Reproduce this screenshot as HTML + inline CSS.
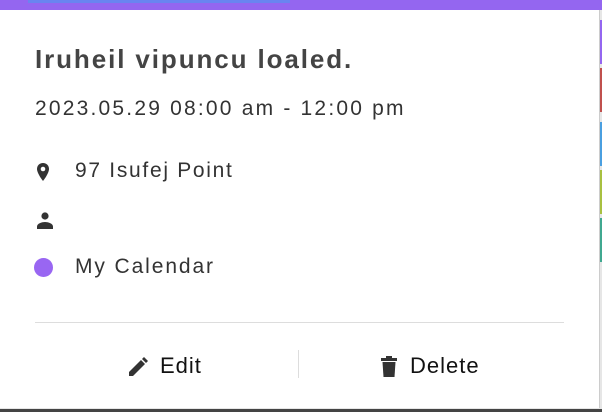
<!DOCTYPE html>
<html><head><style>
body{margin:0;width:602px;height:412px;overflow:hidden;background:#e6e6e6;font-family:"Liberation Sans",sans-serif;position:relative}
.top{position:absolute;left:0;top:0;width:602px;height:10px;background:#9466f0}
.blue{position:absolute;left:28px;top:0;width:262px;height:3px;background:#6a84f0}
.card{position:absolute;left:0;top:10px;width:599px;height:398px;background:#fff;border-right:1px solid #ccc}
.bot{position:absolute;left:0;top:409px;width:602px;height:3px;background:#444}
.side{position:absolute;left:600px;width:2px}
.t{position:absolute;white-space:nowrap}
</style></head><body>
<div class="top"><div class="blue"></div></div>
<div class="side" style="top:20px;height:44px;background:#9466f0"></div>
<div class="side" style="top:68px;height:44px;background:#c0504d"></div>
<div class="side" style="top:122px;height:44px;background:#4a9fe0"></div>
<div class="side" style="top:170px;height:44px;background:#a8c040"></div>
<div class="side" style="top:218px;height:44px;background:#40a890"></div>
<div class="card">
<div class="t" style="left:35px;top:34px;font-size:26px;letter-spacing:1.9px;font-weight:bold;color:#444">Iruheil vipuncu loaled.</div>
<div class="t" style="left:35px;top:87px;font-size:21px;letter-spacing:2.2px;color:#333">2023.05.29 08:00 am - 12:00 pm</div>
<svg style="position:absolute;left:35px;top:152px" width="16" height="20" viewBox="0 0 16 20"><path d="M8 1C4.4 1 2 3.6 2 7c0 4.5 6 12 6 12s6-7.5 6-12c0-3.4-2.4-6-6-6z" fill="#333"/><circle cx="8" cy="7" r="2.3" fill="#fff"/></svg>
<div class="t" style="left:75px;top:149px;font-size:21px;letter-spacing:1.7px;color:#333">97 Isufej Point</div>
<svg style="position:absolute;left:35px;top:200px" width="20" height="20" viewBox="0 0 20 20"><circle cx="10" cy="6" r="3.6" fill="#333"/><path d="M2 19v-2.5c0-3 5-4.5 8-4.5s8 1.5 8 4.5V19z" fill="#333"/></svg>
<div style="position:absolute;left:34px;top:248px;width:19px;height:19px;border-radius:50%;background:#9966f2"></div>
<div class="t" style="left:75px;top:245px;font-size:21px;letter-spacing:1.9px;color:#333">My Calendar</div>
<div style="position:absolute;left:35px;top:312px;width:529px;height:1px;background:#ddd"></div>
<div style="position:absolute;left:298px;top:340px;width:1px;height:28px;background:#ddd"></div>
<svg style="position:absolute;left:128px;top:347px" width="20" height="20" viewBox="0 0 20 20"><path d="M1 19v-4L13 3l4 4L5 19z" fill="#333"/><path d="M14 2l2-2 4 4-2 2z" fill="#333"/></svg>
<div class="t" style="left:160px;top:343px;font-size:22px;letter-spacing:1px;color:#111">Edit</div>
<svg style="position:absolute;left:380px;top:346px" width="18" height="22" viewBox="0 0 18 22"><rect x="1" y="2" width="16" height="3" fill="#333"/><rect x="6" y="0" width="6" height="3" fill="#333"/><path d="M2.5 6h13l-1 15h-11z" fill="#333"/></svg>
<div class="t" style="left:410px;top:343px;font-size:22px;letter-spacing:1px;color:#111">Delete</div>
</div>
<div class="bot"></div>
</body></html>
